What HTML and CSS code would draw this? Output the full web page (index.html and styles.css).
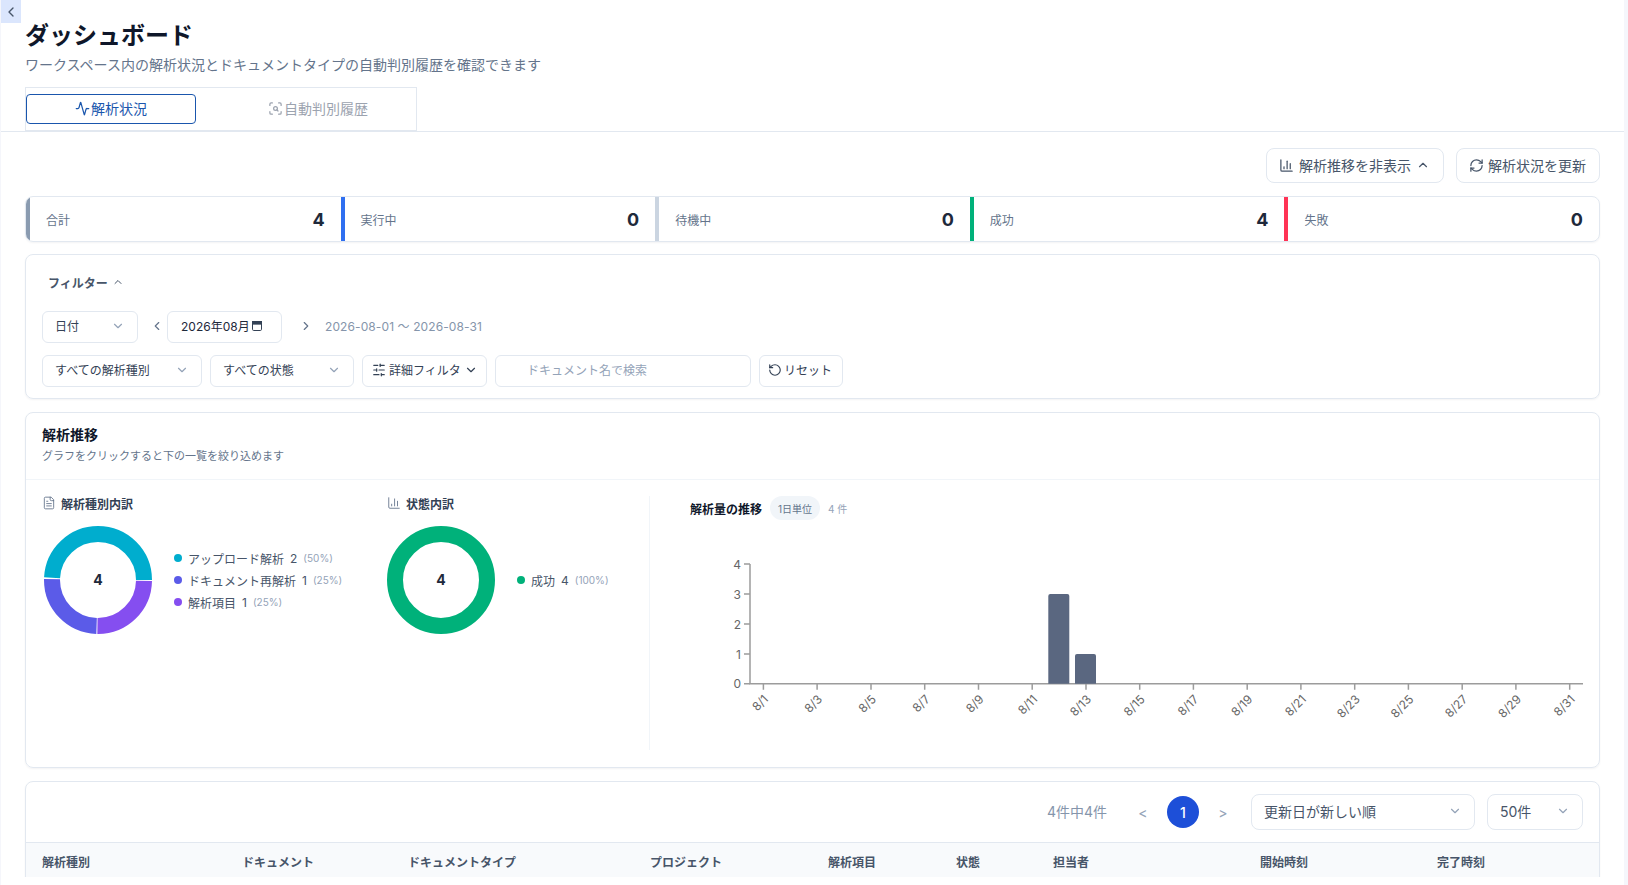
FILE: index.html
```html
<!DOCTYPE html>
<html lang="ja">
<head>
<meta charset="UTF-8">
<title>ダッシュボード</title>
<link rel="stylesheet" href="styles.css">
</head>
<body>

    <svg class="icon-defs" aria-hidden="true">
        <symbol id="i-down" viewBox="0 0 24 24"><path d="m6 9 6 6 6-6"/></symbol>
        <symbol id="i-up" viewBox="0 0 24 24"><path d="m18 15-6-6-6 6"/></symbol>
        <symbol id="i-left" viewBox="0 0 24 24"><path d="m15 18-6-6 6-6"/></symbol>
        <symbol id="i-right" viewBox="0 0 24 24"><path d="m9 18 6-6-6-6"/></symbol>
        <symbol id="i-bars" viewBox="0 0 24 24"><path d="M3 3v16a2 2 0 0 0 2 2h16"/><path d="M18 17V9"/><path d="M13 17V5"/><path d="M8 17v-3"/></symbol>
        <symbol id="i-refresh" viewBox="0 0 24 24"><path d="M3 12a9 9 0 0 1 9-9 9.75 9.75 0 0 1 6.74 2.74L21 8"/><path d="M21 3v5h-5"/><path d="M21 12a9 9 0 0 1-9 9 9.75 9.75 0 0 1-6.74-2.74L3 16"/><path d="M8 16H3v5"/></symbol>
        <symbol id="i-file" viewBox="0 0 24 24"><path d="M15 2H6a2 2 0 0 0-2 2v16a2 2 0 0 0 2 2h12a2 2 0 0 0 2-2V7Z"/><path d="M14 2v4a2 2 0 0 0 2 2h4"/><path d="M10 9H8"/><path d="M16 13H8"/><path d="M16 17H8"/></symbol>
    </svg>

    <div class="shell">
        <main class="main">
            <button class="back-button"><svg class="icon icon-16"><use href="#i-left"/></svg></button>

            <header class="page-head">
                <h1 class="page-title">ダッシュボード</h1>
                <p class="page-sub">ワークスペース内の解析状況とドキュメントタイプの自動判別履歴を確認できます</p>
                <div class="tabs">
                    <button class="tab tab-active">
                        <svg class="icon icon-15" viewBox="0 0 24 24"><path d="M22 12h-2.48a2 2 0 0 0-1.93 1.46l-2.35 8.36a.25.25 0 0 1-.48 0L9.24 2.18a.25.25 0 0 0-.48 0l-2.35 8.36A2 2 0 0 1 4.49 12H2"/></svg>解析状況
                    </button>
                    <button class="tab">
                        <svg class="icon icon-15" viewBox="0 0 24 24"><path d="M3 7V5a2 2 0 0 1 2-2h2"/><path d="M17 3h2a2 2 0 0 1 2 2v2"/><path d="M21 17v2a2 2 0 0 1-2 2h-2"/><path d="M7 21H5a2 2 0 0 1-2-2v-2"/><circle cx="12" cy="12" r="3"/><path d="m16 16-1.9-1.9"/></svg>自動判別履歴
                    </button>
                </div>
            </header>

            <div class="content">

                <div class="actions">
                    <button class="action-button action-trend">
                        <svg class="icon icon-15"><use href="#i-bars"/></svg>
                        <span>解析推移を非表示</span>
                        <svg class="icon icon-14"><use href="#i-up"/></svg>
                    </button>
                    <button class="action-button action-refresh">
                        <svg class="icon icon-15"><use href="#i-refresh"/></svg>
                        <span>解析状況を更新</span>
                    </button>
                </div>

                <!-- Stats -->
                <section class="stats">
                    <div class="stat stat-total"><span class="stat-label">合計</span><span class="stat-value">4</span></div>
                    <div class="stat stat-running"><span class="stat-label">実行中</span><span class="stat-value">0</span></div>
                    <div class="stat stat-waiting"><span class="stat-label">待機中</span><span class="stat-value">0</span></div>
                    <div class="stat stat-success"><span class="stat-label">成功</span><span class="stat-value">4</span></div>
                    <div class="stat stat-failed"><span class="stat-label">失敗</span><span class="stat-value">0</span></div>
                </section>

                <!-- Filter -->
                <section class="card filter-card">
                    <button class="filter-toggle">フィルター <svg class="icon icon-12"><use href="#i-up"/></svg></button>
                    <div class="filter-row filter-row-date">
                        <button class="field select-date">日付<svg class="icon icon-14 field-chevron"><use href="#i-down"/></svg></button>
                        <button class="month-nav month-prev"><svg class="icon icon-14"><use href="#i-left"/></svg></button>
                        <div class="field month-field">
                            2026年08月
                            <svg class="calendar" viewBox="0 0 12 12"><rect x="1.5" y="1.5" width="9" height="9" rx="1.2"/><rect x="1.5" y="1.5" width="9" height="2.6"/></svg>
                        </div>
                        <button class="month-nav month-next"><svg class="icon icon-14"><use href="#i-right"/></svg></button>
                        <span class="date-range">2026-08-01 〜 2026-08-31</span>
                    </div>
                    <div class="filter-row">
                        <button class="field select-kind">すべての解析種別<svg class="icon icon-14 field-chevron"><use href="#i-down"/></svg></button>
                        <button class="field select-status">すべての状態<svg class="icon icon-14 field-chevron"><use href="#i-down"/></svg></button>
                        <button class="field detail-button">
                            <svg class="icon icon-14" viewBox="0 0 24 24"><line x1="21" y1="4" x2="14" y2="4"/><line x1="10" y1="4" x2="3" y2="4"/><line x1="21" y1="12" x2="12" y2="12"/><line x1="8" y1="12" x2="3" y2="12"/><line x1="21" y1="20" x2="16" y2="20"/><line x1="12" y1="20" x2="3" y2="20"/><line x1="14" y1="2" x2="14" y2="6"/><line x1="8" y1="10" x2="8" y2="14"/><line x1="16" y1="18" x2="16" y2="22"/></svg>
                            <span>詳細フィルタ</span>
                            <svg class="icon icon-14"><use href="#i-down"/></svg>
                        </button>
                        <input class="field search-input" type="text" placeholder="ドキュメント名で検索">
                        <button class="field reset-button">
                            <svg class="icon icon-14" viewBox="0 0 24 24"><path d="M3 12a9 9 0 1 0 9-9 9.75 9.75 0 0 0-6.74 2.74L3 8"/><path d="M3 3v5h5"/></svg>リセット
                        </button>
                    </div>
                </section>

                <!-- Charts -->
                <section class="card chart-card">
                    <div class="chart-head">
                        <h2 class="chart-title">解析推移</h2>
                        <p class="chart-sub">グラフをクリックすると下の一覧を絞り込めます</p>
                    </div>
                    <div class="chart-body">
                        <div class="breakdowns">
                            <div class="breakdown breakdown-kind">
                                <h3 class="breakdown-title"><svg class="icon icon-14"><use href="#i-file"/></svg>解析種別内訳</h3>
                                <div class="donut-row">
                                    <svg class="donut" width="108" height="108" viewBox="0 0 108 108">
                                        <g fill="none" stroke-width="16" transform="rotate(180 54 54)">
                                            <circle cx="54" cy="54" r="46" pathLength="100" stroke="#00adce" stroke-dasharray="49.2 50.8" stroke-dashoffset="-0.8"/>
                                            <circle cx="54" cy="54" r="46" pathLength="100" stroke="#854ef0" stroke-dasharray="24.9 75.1" stroke-dashoffset="-50.3"/>
                                            <circle cx="54" cy="54" r="46" pathLength="100" stroke="#5b5be8" stroke-dasharray="24.8 75.2" stroke-dashoffset="-75.5"/>
                                        </g>
                                        <text class="donut-total" x="54" y="59" text-anchor="middle">4</text>
                                    </svg>
                                    <ul class="legend">
                                        <li class="legend-item"><i class="dot dot-upload"></i><span>アップロード解析</span><span>2</span><small>(50%)</small></li>
                                        <li class="legend-item"><i class="dot dot-reparse"></i><span>ドキュメント再解析</span><span>1</span><small>(25%)</small></li>
                                        <li class="legend-item"><i class="dot dot-field"></i><span>解析項目</span><span>1</span><small>(25%)</small></li>
                                    </ul>
                                </div>
                            </div>
                            <div class="breakdown">
                                <h3 class="breakdown-title"><svg class="icon icon-14"><use href="#i-bars"/></svg>状態内訳</h3>
                                <div class="donut-row">
                                    <svg class="donut" width="108" height="108" viewBox="0 0 108 108">
                                        <circle cx="54" cy="54" r="46" fill="none" stroke="#00b17a" stroke-width="16"/>
                                        <text class="donut-total" x="54" y="59" text-anchor="middle">4</text>
                                    </svg>
                                    <ul class="legend">
                                        <li class="legend-item"><i class="dot dot-success"></i><span>成功</span><span>4</span><small>(100%)</small></li>
                                    </ul>
                                </div>
                            </div>
                        </div>

                        <div class="trend">
                            <div class="trend-head">
                                <h3 class="trend-title">解析量の推移</h3>
                                <span class="trend-badge">1日単位</span>
                                <span class="trend-count">4 件</span>
                            </div>
                            <svg class="trend-chart" width="890" height="220" viewBox="0 0 890 220">
                                <g class="axis">
                                    <path d="M50 34V153.7H883"/>
                                    <path d="M44 34h6M44 64h6M44 94h6M44 124h6M44 153.7h6"/>
                                    <path d="M63.4 153.7v6M117.1 153.7v6M171 153.7v6M224.7 153.7v6M278.5 153.7v6M332.2 153.7v6M386 153.7v6M439.7 153.7v6M493.4 153.7v6M547.2 153.7v6M600.9 153.7v6M654.7 153.7v6M708.4 153.7v6M762.2 153.7v6M815.9 153.7v6M869.7 153.7v6"/>
                                </g>
                                <g class="tick-y" text-anchor="end">
                                    <text x="41" y="38.500">4</text>
                                    <text x="41" y="68.500">3</text>
                                    <text x="41" y="98.500">2</text>
                                    <text x="41" y="128.500">1</text>
                                    <text x="41" y="158">0</text>
                                </g>
                                <g class="bars">
                                    <path d="M348.3 153.7V66a2 2 0 0 1 2-2h17a2 2 0 0 1 2 2v87.7Z"/>
                                    <path d="M375 153.7V126a2 2 0 0 1 2-2h17a2 2 0 0 1 2 2v27.7Z"/>
                                </g>
                                <g class="tick-x" text-anchor="end">
                                    <text transform="translate(69 170) rotate(-45)">8/1</text>
                                    <text transform="translate(123 170) rotate(-45)">8/3</text>
                                    <text transform="translate(177 170) rotate(-45)">8/5</text>
                                    <text transform="translate(230.700 170) rotate(-45)">8/7</text>
                                    <text transform="translate(284.500 170) rotate(-45)">8/9</text>
                                    <text transform="translate(338.200 170) rotate(-45)">8/11</text>
                                    <text transform="translate(392 170) rotate(-45)">8/13</text>
                                    <text transform="translate(445.700 170) rotate(-45)">8/15</text>
                                    <text transform="translate(499.400 170) rotate(-45)">8/17</text>
                                    <text transform="translate(553.200 170) rotate(-45)">8/19</text>
                                    <text transform="translate(606.900 170) rotate(-45)">8/21</text>
                                    <text transform="translate(660.700 170) rotate(-45)">8/23</text>
                                    <text transform="translate(714.400 170) rotate(-45)">8/25</text>
                                    <text transform="translate(768.200 170) rotate(-45)">8/27</text>
                                    <text transform="translate(821.900 170) rotate(-45)">8/29</text>
                                    <text transform="translate(875.700 170) rotate(-45)">8/31</text>
                                </g>
                            </svg>
                        </div>
                    </div>
                </section>

                <!-- List -->
                <section class="card list-card">
                    <div class="list-toolbar">
                        <span class="list-count">4件中4件</span>
                        <div class="pager">
                            <button class="pager-arrow">&lt;</button>
                            <button class="pager-page">1</button>
                            <button class="pager-arrow">&gt;</button>
                        </div>
                        <button class="field field-large select-sort">更新日が新しい順<svg class="icon icon-14 field-chevron"><use href="#i-down"/></svg></button>
                        <button class="field field-large select-size">50件<svg class="icon icon-14 field-chevron"><use href="#i-down"/></svg></button>
                    </div>
                    <div class="list-head">
                        <span>解析種別</span>
                        <span>ドキュメント</span>
                        <span>ドキュメントタイプ</span>
                        <span>プロジェクト</span>
                        <span>解析項目</span>
                        <span>状態</span>
                        <span>担当者</span>
                        <span>開始時刻</span>
                        <span>完了時刻</span>
                    </div>
                </section>

            </div>
        </main>
    </div>

</body>
</html>
```

FILE: styles.css
```css
* {
    box-sizing: border-box;
}

html, body {
    height: 100%;
}

body {
    margin: 0;
    background-color: #f5f6fb;
    color: #1e293b;
    font-family: 'Inter', 'Noto Sans CJK JP', sans-serif;
    font-size: 12px;
    overflow: hidden;
}

button, input {
    font-family: inherit;
    font-size: inherit;
    color: inherit;
}

button {
    background: none;
    border: none;
    padding: 0;
    cursor: pointer;
}

.icon-defs {
    display: none;
}

.icon {
    flex: none;
    fill: none;
    stroke: currentColor;
    stroke-width: 2;
    stroke-linecap: round;
    stroke-linejoin: round;
}

.icon-12 { width: 12px; height: 12px; }
.icon-14 { width: 14px; height: 14px; }
.icon-15 { width: 15px; height: 15px; }
.icon-16 { width: 16px; height: 16px; }

/* Shell */
.shell {
    height: 885px;
    padding: 0 4px 0 1px;
}

.main {
    position: relative;
    height: 100%;
    background-color: #fff;
}

.back-button {
    position: absolute;
    top: 0;
    left: 0;
    width: 20px;
    height: 23px;
    display: flex;
    align-items: center;
    justify-content: center;
    background-color: #dbe6fd;
    color: #475569;
}

/* Page head */
.page-head {
    padding: 20px 24px 0;
    border-bottom: 1px solid #e2e8f0;
}

.page-title {
    margin: 0;
    font-size: 24px;
    line-height: 32px;
    font-weight: 700;
    color: #0f172a;
}

.page-sub {
    margin: 3px 0 0;
    font-size: 14px;
    line-height: 20px;
    color: #64748b;
}

.tabs {
    display: flex;
    gap: 24px;
    width: 392px;
    height: 44px;
    margin-top: 12px;
    padding: 6px 0 0;
    border: 1px solid #e2e8f0;
}

.tab {
    display: flex;
    align-items: center;
    justify-content: center;
    gap: 1px;
    width: 196px;
    height: 30px;
    padding-bottom: 2px;
    font-size: 14px;
    color: #9ca3af;
}

.tab-active {
    width: 170px;
    border: 1.5px solid #1a56ad;
    border-radius: 4px;
    color: #1a56ad;
}

/* Content */
.content {
    display: flex;
    flex-direction: column;
    height: 745px;
    padding: 16px 24px 0;
    overflow: hidden;
}

.actions {
    display: flex;
    justify-content: flex-end;
    gap: 12px;
    flex: none;
}

.action-button {
    display: flex;
    align-items: center;
    height: 35px;
    padding-bottom: 1px;
    border: 1px solid #e2e8f0;
    border-radius: 8px;
    font-size: 14px;
    color: #475569;
}

.action-trend {
    gap: 5px;
    width: 178px;
    padding-left: 12px;
}

.action-refresh {
    gap: 4px;
    width: 144px;
    padding-left: 12px;
}

/* Stats */
.stats {
    display: grid;
    grid-template-columns: repeat(5, 1fr);
    flex: none;
    height: 46px;
    margin-top: 13px;
    border: 1px solid #e2e8f0;
    border-radius: 8px;
    overflow: hidden;
    box-shadow: 0 1px 2px rgba(15, 23, 42, 0.05);
}

.stat {
    display: flex;
    align-items: center;
    justify-content: space-between;
    padding: 0 16px 0 16px;
    border-left: 4px solid #8a9bb0;
}

.stat-running { border-left-color: #2f6ff0; }
.stat-waiting { border-left-color: #cbd5e1; }
.stat-success { border-left-color: #00b17a; }
.stat-failed { border-left-color: #ff3355; }

.stat-label {
    padding-top: 1px;
    color: #64748b;
}

.stat-value {
    font-size: 18px;
    font-weight: 700;
}

/* Cards */
.card {
    flex: none;
    margin-top: 12px;
    border: 1px solid #e2e8f0;
    border-radius: 8px;
    box-shadow: 0 1px 2px rgba(15, 23, 42, 0.05);
}

/* Filter */
.filter-card {
    height: 145px;
    padding: 15px 16px 0;
}

.filter-toggle {
    display: flex;
    align-items: center;
    gap: 4px;
    height: 24px;
    margin: 0 0 17px 6px;
    font-weight: 700;
    color: #475569;
}

.filter-row {
    display: flex;
    align-items: center;
    gap: 8px;
    height: 32px;
    margin-bottom: 12px;
}

.field {
    display: flex;
    align-items: center;
    height: 32px;
    padding: 0 12px 3px;
    background-color: #fff;
    border: 1px solid #e2e8f0;
    border-radius: 6px;
    color: #334155;
    text-align: left;
    white-space: nowrap;
}

.field-chevron {
    margin-left: auto;
    color: #94a3b8;
}

.select-date { width: 96px; }
.select-kind { width: 160px; }
.select-status { width: 144px; }

.month-nav {
    display: flex;
    align-items: center;
    justify-content: center;
    width: 14px;
    height: 32px;
    padding-bottom: 2px;
    color: #64748b;
}

.filter-row-date { gap: 0; }
.month-prev { margin: 0 3px 0 12px; }
.month-next { margin: 0 12px 0 17px; }

.month-field {
    width: 115px;
    padding-left: 13px;
    color: #1e293b;
}

.calendar {
    width: 12px;
    height: 12px;
    margin-left: 1px;
    fill: #334155;
    stroke: #334155;
}

.calendar rect:first-child {
    fill: none;
}

.date-range {
    padding-bottom: 4px;
    letter-spacing: 0.1px;
    color: #8595ab;
}

.detail-button {
    gap: 3px;
    width: 125px;
    padding-left: 9px;
    padding-right: 8px;
}

.search-input {
    width: 256px;
    padding-left: 31px;
    padding-bottom: 1px;
    outline: none;
}

.search-input::placeholder {
    color: #94a3b8;
}

.reset-button {
    gap: 2px;
    width: 84px;
    padding-left: 8px;
    padding-right: 8px;
}

/* Charts */
.chart-card {
    height: 356px;
    margin-top: 13px;
}

.chart-head {
    height: 67px;
    padding: 12px 16px 0;
    border-bottom: 1px solid #f1f5f9;
}

.chart-title {
    margin: 0;
    font-size: 14px;
    line-height: 20px;
    font-weight: 700;
    color: #0f172a;
}

.chart-sub {
    margin: 3px 0 0;
    font-size: 11px;
    line-height: 16px;
    color: #64748b;
}

.chart-body {
    display: flex;
    padding: 16px 16px 0;
}

.breakdowns {
    display: grid;
    flex: none;
    grid-template-columns: 345px 1fr;
    width: 608px;
    height: 254px;
    border-right: 1px solid #f1f5f9;
}

.breakdown-kind .donut-row {
    padding-left: 2px;
}

.breakdown-title {
    display: flex;
    align-items: center;
    gap: 5px;
    height: 14px;
    margin: 0 0 16px;
    font-size: 12px;
    font-weight: 700;
    color: #334155;
}

.breakdown-title .icon {
    stroke-width: 1.5;
    color: #64748b;
}

.donut-row {
    display: flex;
    align-items: center;
    gap: 22px;
}

.donut {
    flex: none;
}

.donut-total {
    font-size: 14px;
    font-weight: 700;
    fill: #1e293b;
}

.legend {
    display: flex;
    flex-direction: column;
    gap: 4px;
    margin: 0;
    padding: 0;
    list-style: none;
}

.legend-item {
    display: flex;
    align-items: center;
    gap: 6px;
    height: 18px;
    color: #475569;
    white-space: nowrap;
}

.legend-item small {
    font-size: 10px;
    color: #94a3b8;
}

.dot {
    width: 8px;
    height: 8px;
    border-radius: 50%;
}

.dot-upload { background-color: #00adce; }
.dot-reparse { background-color: #5b5be8; }
.dot-field { background-color: #854ef0; }
.dot-success { background-color: #00b17a; }

.trend {
    padding-left: 40px;
}

.trend-head {
    display: flex;
    align-items: center;
    height: 24px;
}

.trend-title {
    margin: 0 8px 0 0;
    font-size: 12px;
    font-weight: 700;
    color: #0f172a;
}

.trend-badge {
    display: flex;
    align-items: center;
    height: 24px;
    padding: 0 8px;
    border-radius: 12px;
    background-color: #f1f5f9;
    font-size: 10px;
    color: #64748b;
}

.trend-count {
    margin-left: 8px;
    font-size: 10px;
    color: #94a3b8;
}

.trend-chart {
    display: block;
    margin: 10px 0 0 10px;
}

.axis path {
    fill: none;
    stroke: #9c9c9c;
    stroke-width: 1.5;
}

.tick-y text, .tick-x text {
    font-size: 12px;
    fill: #666;
}

.bars path {
    fill: #5a6780;
}

/* List */
.list-card {
    height: 110px;
    margin-top: 13px;
}

.list-toolbar {
    display: flex;
    align-items: center;
    justify-content: flex-end;
    height: 61px;
    padding-right: 16px;
    border-bottom: 1px solid #e2e8f0;
    font-size: 14px;
}

.list-count {
    margin-right: 20px;
    padding-bottom: 3px;
    color: #8595ab;
}

.pager {
    display: flex;
    gap: 8px;
    margin-right: 12px;
}

.pager-arrow, .pager-page {
    width: 32px;
    height: 32px;
}

.pager-arrow {
    color: #94a3b8;
}

.pager-page {
    border-radius: 50%;
    background-color: #1d4fd8;
    color: #fff;
    font-weight: 500;
}

.field-large {
    height: 36px;
    padding-bottom: 3px;
    border-radius: 8px;
    color: #475569;
}

.select-sort {
    width: 224px;
    margin-right: 12px;
}

.select-size { width: 96px; }

.list-head {
    display: grid;
    grid-template-columns: 200px 166px 242px 178px 128px 97px 207px 177px 1fr;
    height: 48px;
    padding: 10px 16px 0;
    border-radius: 0 0 8px 8px;
    background-color: #f8fafc;
    font-size: 12px;
    line-height: 20px;
    font-weight: 700;
    color: #475569;
}
```
